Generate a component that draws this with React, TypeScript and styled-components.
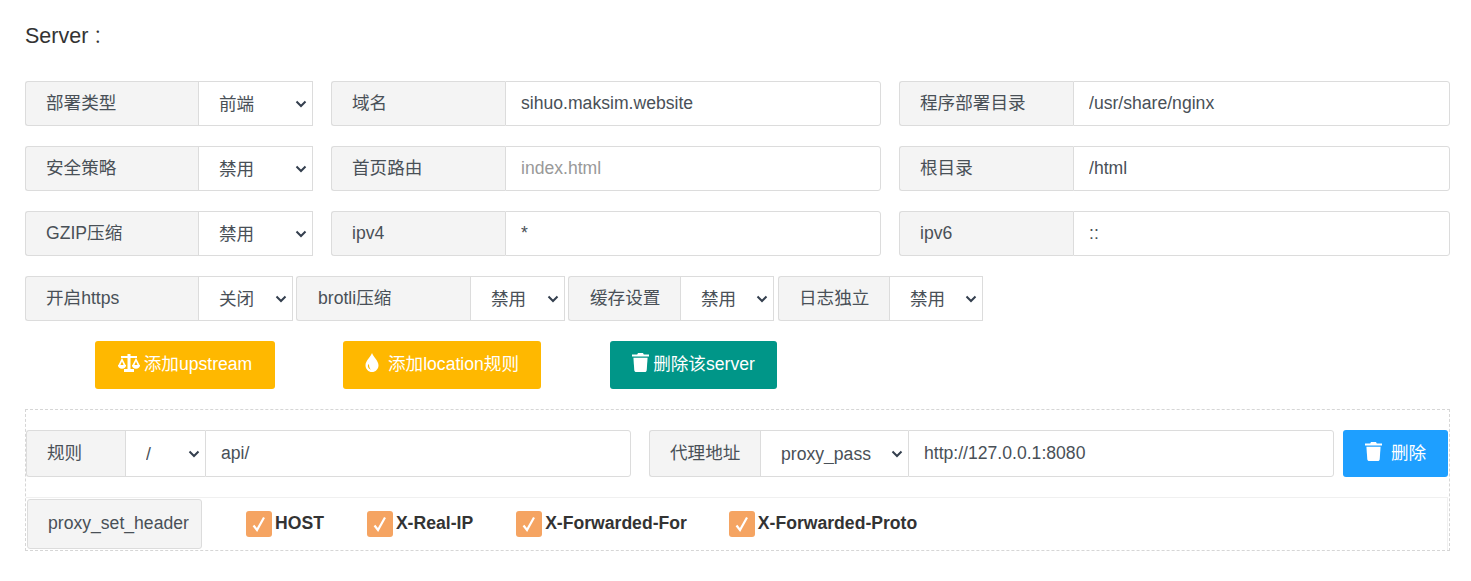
import React from "react";
import styled, { createGlobalStyle } from "styled-components";

const GlobalStyle = createGlobalStyle`
  html, body {
    margin: 0;
    padding: 0;
    background: #fff;
  }
  body {
    font-family: "Liberation Sans", "Noto Sans CJK SC", sans-serif;
    font-size: 17.6px;
    color: #333;
  }
  * {
    box-sizing: border-box;
  }
`;

const chevron =
  "url(\"data:image/svg+xml,%3Csvg xmlns='http://www.w3.org/2000/svg' width='12' height='8' viewBox='0 0 12 8'%3E%3Cpath d='M1.500 1.500 6 6l4.500-4.500' fill='none' stroke='%23343f4e' stroke-width='2'/%3E%3C/svg%3E\")";

const ScaleIcon = () => (
  <svg width="22" height="18" viewBox="0 0 22 18" fill="currentColor">
    <path d="M9.500 0h3v2H19v2h-6.500v11H16v3H6v-3h3.500V4H3V2h6.500z" />
    <path d="M4 4 .2 11.500h2L4 7.500l1.800 4h2z" />
    <path d="M0 11h8v.6C8 13.600 6.200 14.800 4 14.800S0 13.600 0 11.600z" />
    <path d="M18 4l-3.800 7.500h2l1.800-4 1.800 4h2z" />
    <path d="M14 11h8v.6c0 2-1.800 3.200-4 3.200s-4-1.200-4-3.200z" />
  </svg>
);

const DropIcon = () => (
  <svg width="14" height="19" viewBox="0 0 14 19" fill="currentColor">
    <path
      fillRule="evenodd"
      d="M7 0c1 3.500 6.500 7.800 6.500 12.200C13.500 16 10.600 19 7 19S.5 16 .5 12.200C.5 7.800 6 3.500 7 0zM3 11.500c-.6 2.800 1 4.800 3 5.200-1.300-1.200-2-2.800-2-5.200z"
    />
  </svg>
);

const TrashIcon = () => (
  <svg width="17" height="19" viewBox="0 0 17 19" fill="currentColor">
    <path d="M6 0h5l.8 1.600H17v2H0v-2h5.200z" />
    <path d="M1.400 4.800h14.200l-.9 12.400c-.1 1-.8 1.800-1.800 1.800H4.100c-1 0-1.700-.8-1.800-1.800z" />
  </svg>
);

const Page = styled.div`
  padding: 0 21px 0 25px;
`;

const Title = styled.h2`
  margin: 0;
  padding-top: 23px;
  height: 81px;
  font-size: 21.500px;
  line-height: 26px;
  font-weight: 400;
  color: #333;
`;

const TitleColon = styled.span`
  font-family: "Noto Sans CJK TC", sans-serif;
  font-weight: 300;
  font-size: 19px;
  vertical-align: -1px;
`;

const Grid = styled.div`
  display: grid;
  grid-template-columns: 288px 550px 551px;
  column-gap: 18px;
  row-gap: 20px;
`;

const Group = styled.div<{ $ml?: number }>`
  display: flex;
  height: 45px;
  flex: none;
  margin-left: ${(p) => p.$ml ?? 0}px;
`;

const Label = styled.div<{ $w: number; $pl?: number }>`
  flex: none;
  width: ${(p) => p.$w}px;
  padding: 0 0 1px ${(p) => p.$pl ?? 20}px;
  display: flex;
  align-items: center;
  background: #f4f4f4;
  border: 1px solid #dcdcdc;
  border-right: none;
  border-radius: 3px 0 0 3px;
  color: #495057;
  line-height: 24px;
  white-space: nowrap;
`;

const Select = styled.select<{ $w: number; $joined?: boolean }>`
  flex: none;
  width: ${(p) => p.$w}px;
  height: 100%;
  padding: 0 0 0 20px;
  border: 1px solid #dcdcdc;
  border-right: ${(p) => (p.$joined ? "none" : "1px solid #dcdcdc")};
  background: #fff ${chevron} no-repeat right 5px center;
  appearance: none;
  color: #495057;
  font: inherit;
  border-radius: 0;
  outline: none;
`;

const Input = styled.input`
  flex: 1;
  min-width: 0;
  height: 100%;
  padding: 0 15px;
  border: 1px solid #dcdcdc;
  border-radius: 0 3px 3px 0;
  background: #fff;
  color: #495057;
  font: inherit;
  outline: none;
  &::placeholder {
    color: #999;
  }
`;

const InlineRow = styled.div`
  display: flex;
  gap: 3px;
  margin-top: 20px;
`;

const Actions = styled.div`
  display: flex;
  height: 48px;
  margin-top: 20px;
  padding-left: 70px;
`;

const ActionButton = styled.button<{ $w: number; $bg: string; $ml?: number; $gap?: number }>`
  width: ${(p) => p.$w}px;
  margin-left: ${(p) => p.$ml ?? 0}px;
  height: 48px;
  display: flex;
  align-items: center;
  justify-content: center;
  gap: ${(p) => p.$gap ?? 4}px;
  border: none;
  border-radius: 3px;
  padding: 0 0 5px;
  background: ${(p) => p.$bg};
  color: #fff;
  font: inherit;
  white-space: nowrap;
`;

const Dashed = styled.div`
  margin-top: 20px;
  height: 142px;
  border: 1px dashed #d6d6d6;
  padding: 20px 1px 0 0;
`;

const RuleRow = styled.div`
  display: flex;
  height: 47px;
`;

const RuleHalf = styled.div<{ $w: number; $ml?: number }>`
  display: flex;
  flex: none;
  width: ${(p) => p.$w}px;
  margin-left: ${(p) => p.$ml ?? 0}px;
`;

const DeleteButton = styled(ActionButton)`
  margin-left: 9px;
  gap: 9px;
  height: 47px;
`;

const HeaderRow = styled.div`
  display: flex;
  align-items: center;
  height: 53px;
  margin-top: 20px;
  padding-left: 1px;
  border-top: 1px solid #f0f0f0;
  border-right: 1px solid #f0f0f0;
`;

const HeaderLabel = styled.div`
  flex: none;
  width: 175px;
  height: 50px;
  padding: 0 0 3px 20px;
  display: flex;
  align-items: center;
  background: #f4f4f4;
  border: 1px solid #dcdcdc;
  border-radius: 3px;
  color: #495057;
  line-height: 24px;
`;

const Check = styled.label<{ $ml: number }>`
  display: flex;
  align-items: center;
  gap: 3px;
  margin-left: ${(p) => p.$ml}px;
  font-weight: 700;
  color: #333;
`;

const CheckText = styled.span`
  padding-bottom: 2px;
`;

const CheckBox = styled.span`
  width: 26px;
  height: 26px;
  display: flex;
  align-items: center;
  justify-content: center;
  border-radius: 3px;
  background: #f5a462;
`;

const CheckMark = () => (
  <CheckBox>
    <svg width="14" height="16" viewBox="0 0 14 16" fill="none" stroke="#fff" strokeWidth="2.200">
      <path d="M1.500 9.500 5 14 12 1.500" />
    </svg>
  </CheckBox>
);

const rows = [
  { a: "部署类型", s: "前端", b: "域名", v: "sihuo.maksim.website", c: "程序部署目录", w: "/usr/share/nginx" },
  { a: "安全策略", s: "禁用", b: "首页路由", p: "index.html", c: "根目录", w: "/html" },
  { a: "GZIP压缩", s: "禁用", b: "ipv4", v: "*", c: "ipv6", w: "::" },
];

const inline = [
  { l: "开启https", s: "关闭", lw: 173, sw: 95, pl: 20, ml: 0 },
  { l: "brotli压缩", s: "禁用", lw: 174, sw: 95, pl: 21, ml: 0 },
  { l: "缓存设置", s: "禁用", lw: 112, sw: 94, pl: 21, ml: 0 },
  { l: "日志独立", s: "禁用", lw: 111, sw: 94, pl: 20, ml: 1 },
];

const headers = [
  { name: "HOST", ml: 44 },
  { name: "X-Real-IP", ml: 43 },
  { name: "X-Forwarded-For", ml: 43 },
  { name: "X-Forwarded-Proto", ml: 42 },
];

export default function App() {
  return (
    <Page>
      <GlobalStyle />
      <Title>
        Server<TitleColon>：</TitleColon>
      </Title>
      <Grid>
        {rows.map((r) => (
          <React.Fragment key={r.a}>
            <Group>
              <Label $w={173}>{r.a}</Label>
              <Select $w={115} defaultValue={r.s}>
                <option>{r.s}</option>
              </Select>
            </Group>
            <Group>
              <Label $w={174}>{r.b}</Label>
              <Input defaultValue={r.v} placeholder={r.p} />
            </Group>
            <Group>
              <Label $w={174}>{r.c}</Label>
              <Input defaultValue={r.w} />
            </Group>
          </React.Fragment>
        ))}
      </Grid>
      <InlineRow>
        {inline.map((g) => (
          <Group key={g.l} $ml={g.ml}>
            <Label $w={g.lw} $pl={g.pl}>
              {g.l}
            </Label>
            <Select $w={g.sw} defaultValue={g.s}>
              <option>{g.s}</option>
            </Select>
          </Group>
        ))}
      </InlineRow>
      <Actions>
        <ActionButton $w={180} $bg="#ffb800">
          <ScaleIcon />
          添加upstream
        </ActionButton>
        <ActionButton $w={198} $bg="#ffb800" $ml={68} $gap={9}>
          <DropIcon />
          添加location规则
        </ActionButton>
        <ActionButton $w={167} $bg="#009688" $ml={69}>
          <TrashIcon />
          删除该server
        </ActionButton>
      </Actions>
      <Dashed>
        <RuleRow>
          <RuleHalf $w={605}>
            <Label $w={99}>规则</Label>
            <Select $w={80} $joined defaultValue="/">
              <option>/</option>
            </Select>
            <Input defaultValue="api/" />
          </RuleHalf>
          <RuleHalf $w={685} $ml={18}>
            <Label $w={111}>代理地址</Label>
            <Select $w={148} $joined defaultValue="proxy_pass">
              <option>proxy_pass</option>
            </Select>
            <Input defaultValue="http://127.0.0.1:8080" />
          </RuleHalf>
          <DeleteButton $w={105} $bg="#1e9fff">
            <TrashIcon />
            删除
          </DeleteButton>
        </RuleRow>
        <HeaderRow>
          <HeaderLabel>proxy_set_header</HeaderLabel>
          {headers.map((h) => (
            <Check key={h.name} $ml={h.ml}>
              <CheckMark />
              <CheckText>{h.name}</CheckText>
            </Check>
          ))}
        </HeaderRow>
      </Dashed>
    </Page>
  );
}
